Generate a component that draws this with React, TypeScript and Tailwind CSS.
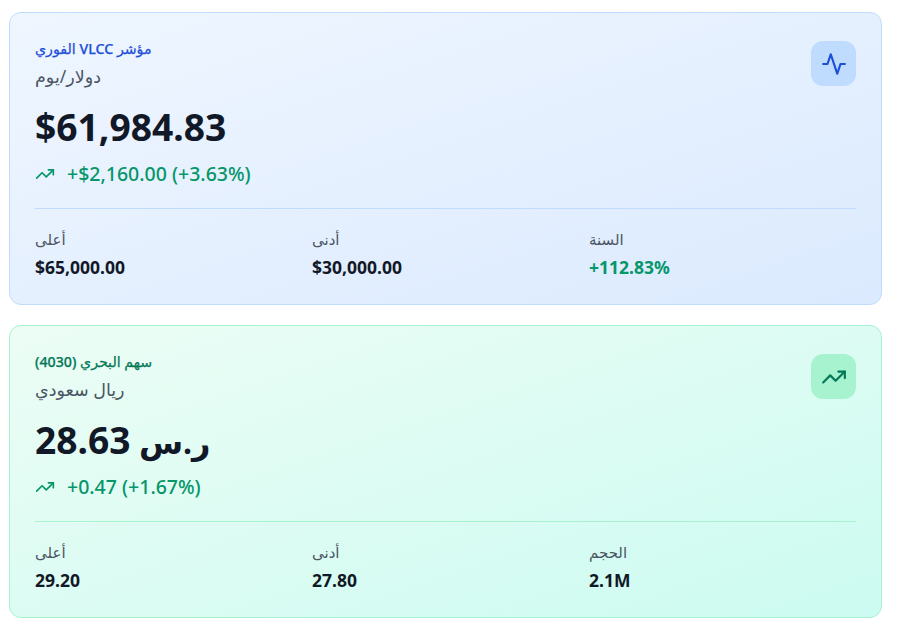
import { TrendingUp } from 'lucide-react'
import { FiActivity } from 'react-icons/fi'

interface Stat {
  label: string
  value: string
  positive?: boolean
}

interface QuoteCard {
  title: string
  unit: string
  price: string
  currency?: string
  change: string
  stats: Stat[]
  icon: 'activity' | 'trend'
  cardClass: string
  titleClass: string
  iconBoxClass: string
  iconClass: string
  dividerClass: string
}

const cards: QuoteCard[] = [
  {
    title: 'مؤشر VLCC الفوري',
    unit: 'دولار/يوم',
    price: '$61,984.83',
    change: '+$2,160.00 (+3.63%)',
    icon: 'activity',
    stats: [
      { label: 'أعلى', value: '$65,000.00' },
      { label: 'أدنى', value: '$30,000.00' },
      { label: 'السنة', value: '+112.83%', positive: true },
    ],
    cardClass: 'border-[#bfdbfe] from-[#eff6ff] to-[#dbeafe]',
    titleClass: 'text-[#1d4ed8]',
    iconBoxClass: 'bg-[#bfdbfe]',
    iconClass: 'text-[#1d4ed8]',
    dividerClass: 'border-[#bfdbfe]',
  },
  {
    title: 'سهم البحري (4030)',
    unit: 'ريال سعودي',
    price: '28.63',
    currency: 'ر.س',
    change: '+0.47 (+1.67%)',
    icon: 'trend',
    stats: [
      { label: 'أعلى', value: '29.20' },
      { label: 'أدنى', value: '27.80' },
      { label: 'الحجم', value: '2.1M' },
    ],
    cardClass: 'border-[#a7f3d0] from-[#ecfdf5] to-[#ccfbf1]',
    titleClass: 'text-[#047857]',
    iconBoxClass: 'bg-[#a7f3d0]',
    iconClass: 'text-[#047857]',
    dividerClass: 'border-[#a7f3d0]',
  },
]

function Card({ card }: { card: QuoteCard }) {
  const Icon = card.icon === 'activity' ? FiActivity : TrendingUp

  return (
    <div className={`rounded-xl border bg-gradient-to-br px-[25px] pt-[26px] pb-[25px] ${card.cardClass}`}>
      <div className="flex items-start justify-between">
        <div>
          <p dir="rtl" className={`w-fit text-[14.2px] font-medium leading-5 [-webkit-text-stroke:0.25px] ${card.titleClass}`}>{card.title}</p>
          <p dir="rtl" className="mt-[5px] w-fit text-[17.5px] leading-6 text-[#4b5563]">{card.unit}</p>
          <p dir="rtl" className="mt-[19px] w-fit text-[37.2px] font-bold leading-10 text-[#111827]">
            {card.currency && <span className="text-[32px] leading-none">{card.currency} </span>}
            <span>{card.price}</span>
          </p>
          <div className="mt-[13px] flex items-center gap-3">
            <TrendingUp className="h-5 w-5 text-[#059669]" />
            <span className="text-[19.5px] font-medium leading-7 text-[#059669]">{card.change}</span>
          </div>
        </div>
        <div className={`mt-[2px] flex h-[45px] w-[45px] items-center justify-center rounded-xl ${card.iconBoxClass}`}>
          <Icon className={`h-[26px] w-[26px] ${card.iconClass}`} />
        </div>
      </div>

      {/* Stats */}
      <div className={`mt-[20px] grid grid-cols-3 gap-[10px] border-t pt-[20px] ${card.dividerClass}`}>
        {card.stats.map((stat) => (
          <div key={stat.label}>
            <p className="text-[15px] leading-5 text-[#4b5563]">{stat.label}</p>
            <p className={`mt-[6px] text-[17.5px] font-bold leading-6 ${stat.positive ? 'text-[#059669]' : 'text-[#111827]'}`}>
              {stat.value}
            </p>
          </div>
        ))}
      </div>
    </div>
  )
}

export default function App() {
  return (
    <div className="flex min-h-screen flex-col gap-5 bg-white pt-3 pr-4 pl-[9px] font-['Noto_Sans','DejaVu_Sans',sans-serif]">
      {cards.map((card) => (
        <Card key={card.title} card={card} />
      ))}
    </div>
  )
}
